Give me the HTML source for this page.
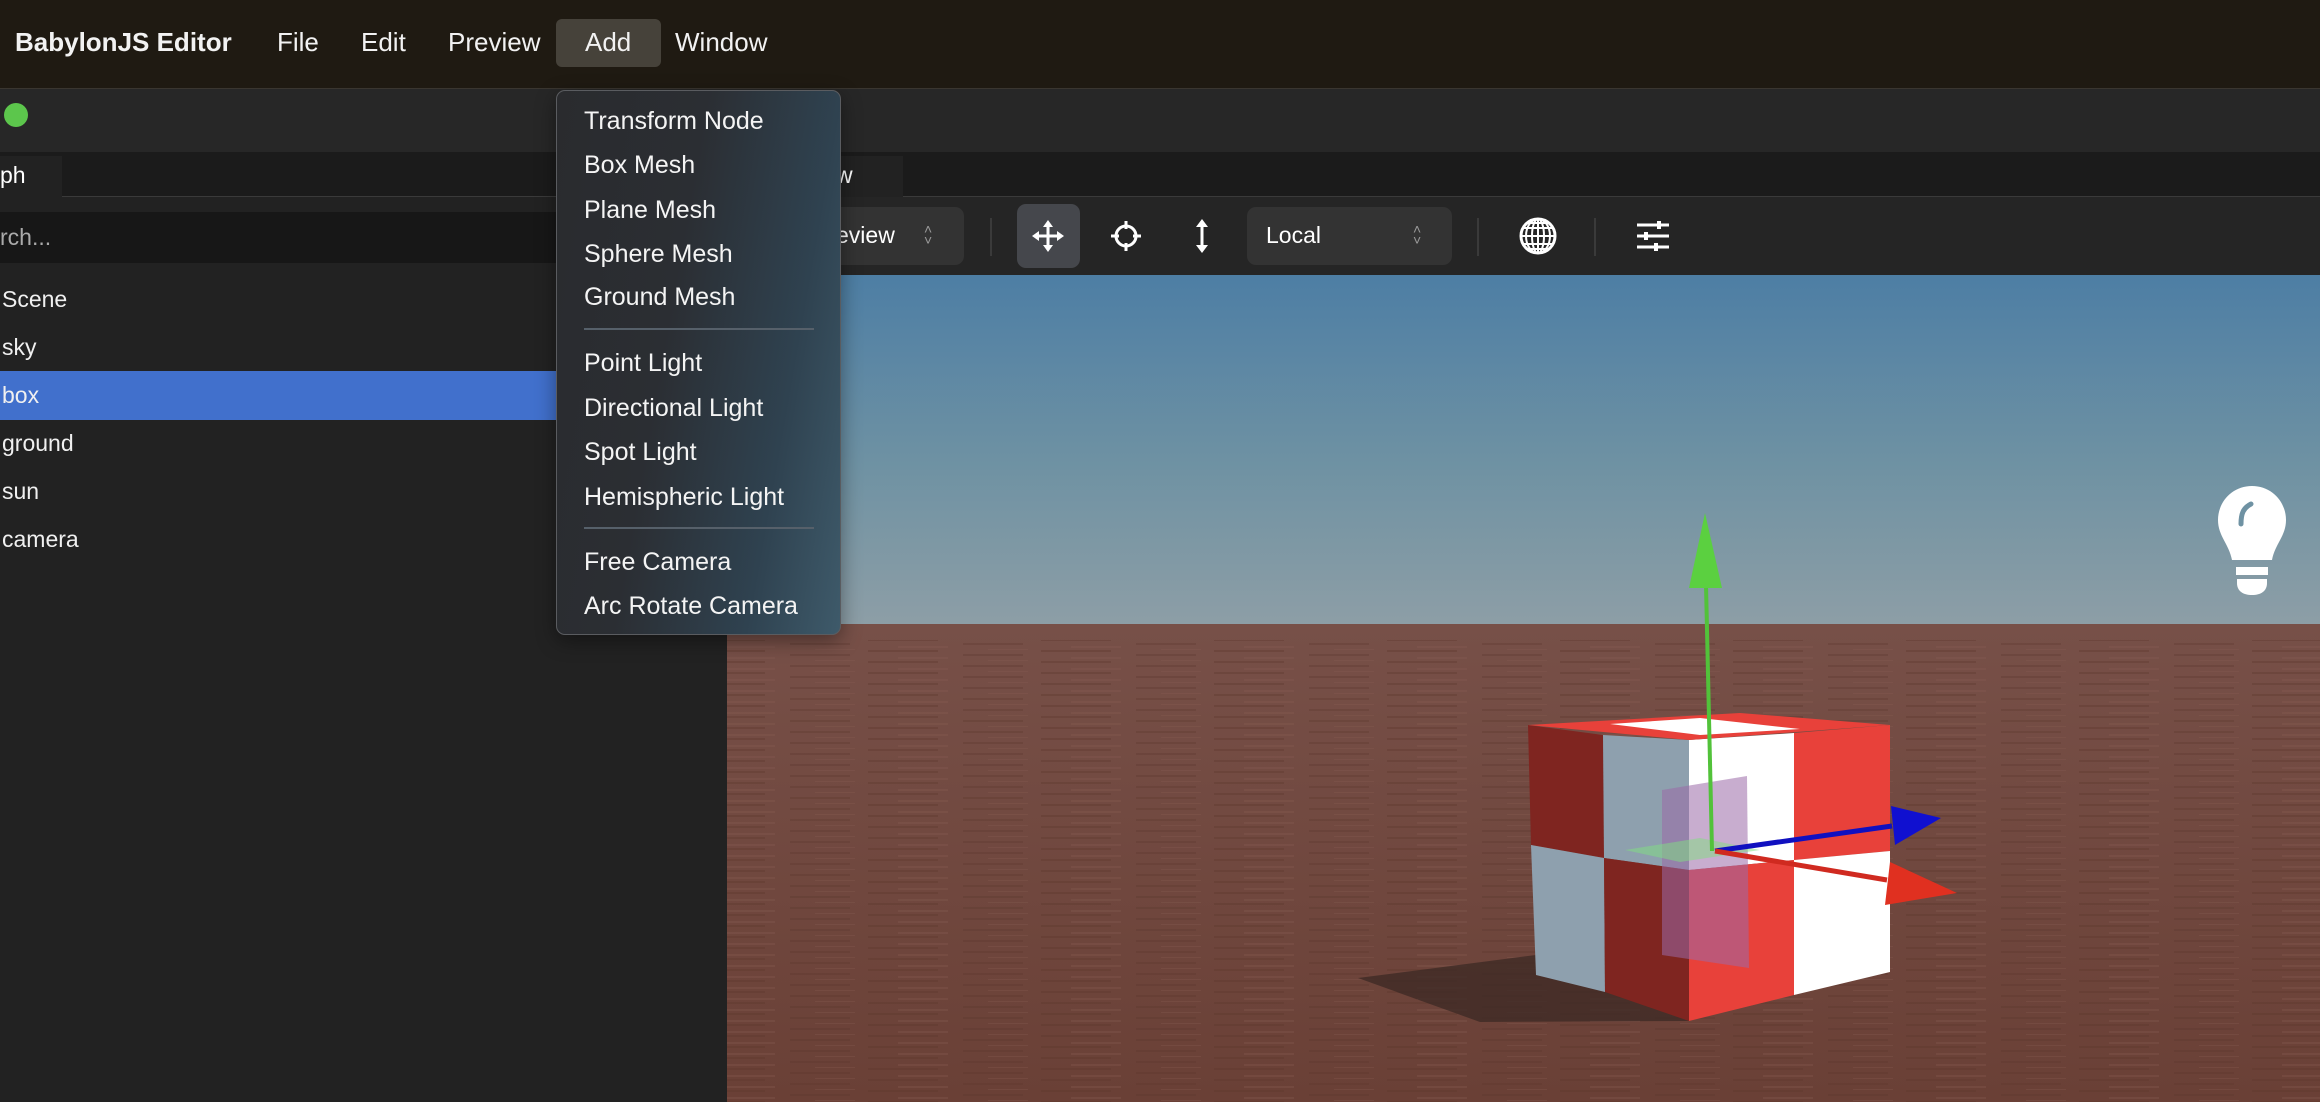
<!DOCTYPE html>
<html><head><meta charset="utf-8"><style>
*{margin:0;padding:0;box-sizing:border-box}
body{width:2320px;height:1102px;overflow:hidden;background:#262626;font-family:"Liberation Sans",sans-serif;color:#fff;position:relative}
.abs{position:absolute}
#menubar{left:0;top:0;width:2320px;height:89px;background:#1f1a12;border-bottom:1px solid #3a3630}
.mb{position:absolute;top:27px;font-size:26px;color:#f2f2f2}
#title{left:0;top:89px;width:2320px;height:63px;background:#272727}
#tabs{left:0;top:152px;width:2320px;height:45px;background:#1b1b1b;border-bottom:1px solid #3a3a3a}
#left{left:0;top:197px;width:727px;height:905px;background:#222}
.tree{position:absolute;left:2px;font-size:23px;color:#f0f0f0}
#tool{left:727px;top:197px;width:1593px;height:78px;background:#252525}
.sel{position:absolute;background:#333;border-radius:9px}
.sep{position:absolute;top:218px;width:2px;height:38px;background:#3a3a3a}
#menu{left:556px;top:90px;width:285px;height:545px;border-radius:9px;border:1px solid #5a5c60;background:linear-gradient(100deg,#2a2b2e 0%,#2b2e33 40%,#2f4250 75%,#3e5a6a 100%);box-shadow:0 6px 20px rgba(0,0,0,.4)}
.mi{position:absolute;left:27px;font-size:25px;color:#f4f4f4;white-space:nowrap}
.msep{position:absolute;left:27px;width:230px;height:2px;background:#56606a}
</style></head><body>
<div id="menubar" class="abs">
 <div class="mb" style="left:15px;font-weight:bold">BabylonJS Editor</div>
 <div class="mb" style="left:277px">File</div>
 <div class="mb" style="left:361px">Edit</div>
 <div class="mb" style="left:448px">Preview</div>
 <div class="abs" style="left:556px;top:19px;width:105px;height:48px;background:#46423a;border-radius:6px"></div>
 <div class="mb" style="left:585px">Add</div>
 <div class="mb" style="left:675px">Window</div>
</div>
<div id="title" class="abs"><div class="abs" style="left:4px;top:14px;width:24px;height:24px;border-radius:50%;background:#5cc64c"></div></div>
<div id="tabs" class="abs">
 <div class="abs" style="left:0;top:4px;width:62px;height:41px;background:#222"></div>
 <div class="abs" style="left:0;top:10px;font-size:23px">ph</div>
 <div class="abs" style="left:800px;top:4px;width:103px;height:41px;background:#222"></div>
 <div class="abs" style="left:836px;top:10px;font-size:23px">w</div>
</div>
<div id="left" class="abs">
 <div class="abs" style="left:0;top:15px;width:727px;height:51px;background:#171717"></div>
 <div class="abs" style="left:0;top:27px;font-size:23px;color:#aaa">rch...</div>
 <div class="abs" style="left:0;top:174px;width:727px;height:49px;background:#4170cc"></div>
 <div class="tree" style="top:89px">Scene</div>
 <div class="tree" style="top:137px">sky</div>
 <div class="tree" style="top:185px">box</div>
 <div class="tree" style="top:233px">ground</div>
 <div class="tree" style="top:281px">sun</div>
 <div class="tree" style="top:329px">camera</div>
</div>
<div id="tool" class="abs"></div>
<div class="sel" style="left:800px;top:207px;width:164px;height:58px"></div>
<div class="abs" style="left:836px;top:222px;font-size:23px">eview</div>
<div class="abs" style="left:924px;top:224px;font-size:14px;color:#999;line-height:11px">˄<br>˅</div>
<div class="sep" style="left:990px"></div>
<div class="abs" style="left:1017px;top:204px;width:63px;height:64px;background:#45474c;border-radius:9px"></div>
<svg class="abs" style="left:1030px;top:218px" width="36" height="36" viewBox="0 0 36 36" fill="#fff" stroke="#fff" stroke-width="3"><line x1="18" y1="6" x2="18" y2="30"/><line x1="6" y1="18" x2="30" y2="18"/><polygon points="18,2 13,9 23,9" stroke="none"/><polygon points="18,34 13,27 23,27" stroke="none"/><polygon points="2,18 9,13 9,23" stroke="none"/><polygon points="34,18 27,13 27,23" stroke="none"/></svg>
<svg class="abs" style="left:1109px;top:219px" width="34" height="34" viewBox="0 0 34 34" fill="none" stroke="#fff" stroke-width="3"><circle cx="17" cy="17" r="10"/><line x1="17" y1="2" x2="17" y2="10"/><line x1="17" y1="24" x2="17" y2="32"/><line x1="2" y1="17" x2="10" y2="17"/><line x1="24" y1="17" x2="32" y2="17"/></svg>
<svg class="abs" style="left:1190px;top:218px" width="24" height="36" viewBox="0 0 24 36" fill="#fff" stroke="#fff" stroke-width="3"><line x1="12" y1="6" x2="12" y2="30"/><polygon points="12,1 6,9 18,9" stroke="none"/><polygon points="12,35 6,27 18,27" stroke="none"/></svg>
<div class="sel" style="left:1247px;top:207px;width:205px;height:58px"></div>
<div class="abs" style="left:1266px;top:222px;font-size:23px">Local</div>
<div class="abs" style="left:1413px;top:224px;font-size:14px;color:#999;line-height:11px">˄<br>˅</div>
<div class="sep" style="left:1477px"></div>
<svg class="abs" style="left:1518px;top:216px" width="40" height="40" viewBox="0 0 40 40" fill="none" stroke="#fff" stroke-width="2"><circle cx="20" cy="20" r="17" stroke-width="3"/><ellipse cx="20" cy="20" rx="6" ry="17"/><ellipse cx="20" cy="20" rx="12" ry="17"/><line x1="20" y1="3" x2="20" y2="37"/><line x1="3" y1="20" x2="37" y2="20"/><line x1="5" y1="12" x2="35" y2="12"/><line x1="5" y1="28" x2="35" y2="28"/><line x1="9" y1="7" x2="31" y2="7"/><line x1="9" y1="33" x2="31" y2="33"/></svg>
<div class="sep" style="left:1594px"></div>
<svg class="abs" style="left:1636px;top:220px" width="34" height="32" viewBox="0 0 34 32" stroke="#fff" stroke-width="3" fill="#fff"><line x1="1" y1="5" x2="33" y2="5"/><line x1="1" y1="16" x2="33" y2="16"/><line x1="1" y1="27" x2="33" y2="27"/><rect x="21" y="1" width="4" height="8" stroke="none"/><rect x="8" y="12" width="4" height="8" stroke="none"/><rect x="18" y="23" width="4" height="8" stroke="none"/></svg>

<svg class="abs" style="left:727px;top:275px" width="1593" height="827" viewBox="727 275 1593 827">
 <defs>
  <linearGradient id="sky" x1="0" y1="0" x2="0" y2="1"><stop offset="0" stop-color="#4d7ea4"/><stop offset=".55" stop-color="#6f92a3"/><stop offset="1" stop-color="#8d9ea6"/></linearGradient>
  <linearGradient id="gnd" x1="0" y1="0" x2="0" y2="1"><stop offset="0" stop-color="#775048"/><stop offset="1" stop-color="#6a4036"/></linearGradient>
  <pattern id="str" x="3" y="0" width="173" height="11" patternUnits="userSpaceOnUse">
   <rect x="0" y="1" width="70" height="2" fill="#5a352c" opacity=".35"/>
   <rect x="95" y="5" width="60" height="2" fill="#5a352c" opacity=".3"/>
   <rect x="30" y="8" width="50" height="2" fill="#8a5e54" opacity=".3"/>
   <rect x="120" y="0" width="40" height="1" fill="#8a5e54" opacity=".3"/>
  </pattern>
 </defs>
 <rect x="727" y="275" width="1593" height="350" fill="url(#sky)"/>
 <rect x="727" y="624" width="1593" height="478" fill="url(#gnd)"/>
 <rect x="727" y="640" width="1593" height="462" fill="url(#str)"/>
 <polygon points="1358,978 1536,955 1689,1021 1480,1022" fill="#3e2a26" opacity=".8"/>
 <polygon points="1528,725 1603,735 1604,858 1531,845" fill="#7f2520"/>
 <polygon points="1603,735 1689,740 1689,870 1604,858" fill="#8ea0ae"/>
 <polygon points="1531,845 1604,858 1605,992 1536,975" fill="#8ea0ae"/>
 <polygon points="1604,858 1689,870 1689,1021 1605,992" fill="#7f2520"/>
 <polygon points="1689,740 1794,733 1794,860 1689,870" fill="#fff"/>
 <polygon points="1794,733 1890,725 1890,851 1794,860" fill="#e8413a"/>
 <polygon points="1689,870 1794,860 1794,995 1689,1021" fill="#e8413a"/>
 <polygon points="1794,860 1890,851 1890,972 1794,995" fill="#fff"/>
 <polygon points="1528,725 1740,713 1890,725 1689,740" fill="#e8413a"/>
 <polygon points="1610,724 1700,718 1800,729 1700,735" fill="#fff"/>
 <polygon points="1662,790 1747,776 1749,968 1662,955" fill="#9a6aa8" opacity=".55"/>
 <polygon points="1625,850 1700,838 1760,850 1680,862" fill="#7fe07f" opacity=".5"/>
 <line x1="1712" y1="851" x2="1706" y2="585" stroke="#52c23a" stroke-width="4"/>
 <polygon points="1705,513 1689,588 1722,588" fill="#5bd040"/>
 <line x1="1715" y1="851" x2="1892" y2="826" stroke="#1010c0" stroke-width="5"/>
 <polygon points="1941,818 1891,806 1895,845" fill="#1010d0"/>
 <line x1="1715" y1="851" x2="1887" y2="880" stroke="#d02a20" stroke-width="5"/>
 <polygon points="1957,893 1890,862 1885,905" fill="#e03020"/>
 <path d="M2252,486 c-20,0 -34,16 -34,34 c0,16 11,24 14,40 l40,0 c3,-16 14,-24 14,-40 c0,-18 -14,-34 -34,-34z" fill="#fff"/>
 <rect x="2236" y="567" width="32" height="8" fill="#fff"/>
 <path d="M2237,579 h30 v4 c0,8 -6,12 -15,12 c-9,0 -15,-4 -15,-12z" fill="#fff"/>
 <path d="M2251,504 c-8,4 -10,10 -10,20" stroke="#6f92a3" stroke-width="5" fill="none" stroke-linecap="round"/>
</svg>

<div id="menu" class="abs">
 <div class="mi" style="top:16px">Transform Node</div>
 <div class="mi" style="top:60px">Box Mesh</div>
 <div class="mi" style="top:105px">Plane Mesh</div>
 <div class="mi" style="top:149px">Sphere Mesh</div>
 <div class="mi" style="top:192px">Ground Mesh</div>
 <div class="msep" style="top:237px"></div>
 <div class="mi" style="top:258px">Point Light</div>
 <div class="mi" style="top:303px">Directional Light</div>
 <div class="mi" style="top:347px">Spot Light</div>
 <div class="mi" style="top:392px">Hemispheric Light</div>
 <div class="msep" style="top:436px"></div>
 <div class="mi" style="top:457px">Free Camera</div>
 <div class="mi" style="top:501px">Arc Rotate Camera</div>
</div>
</body></html>
